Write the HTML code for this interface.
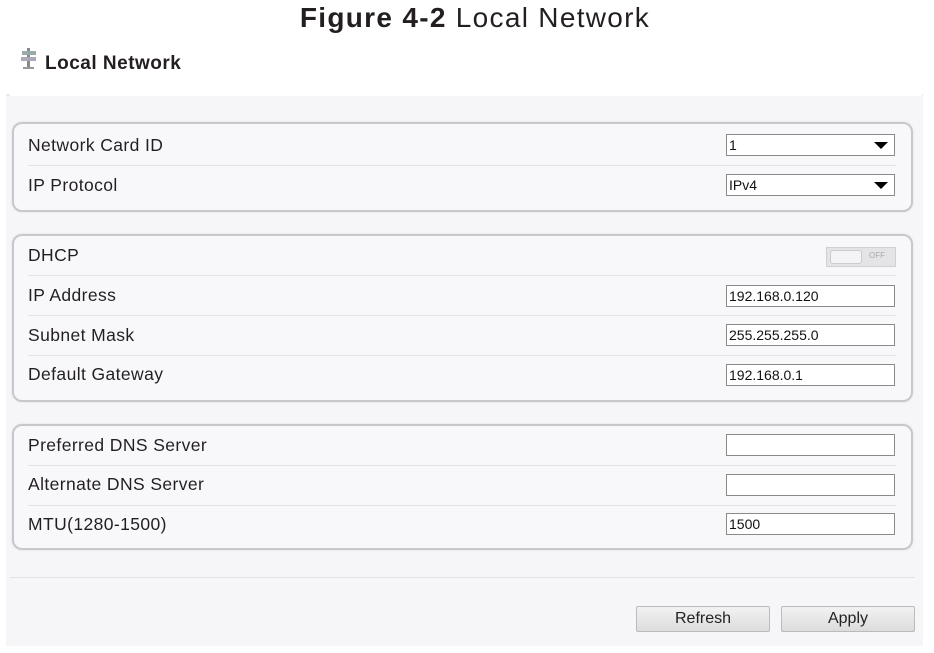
<!DOCTYPE html><html><head><style>
body{margin:0;width:934px;height:653px;background:#fff;font-family:"Liberation Sans",sans-serif;position:relative;overflow:hidden}
.a{position:absolute}
.title{left:0;width:950px;top:2px;text-align:center;font-size:28px;color:#231f20;letter-spacing:1.3px}
.bg{left:6px;top:94px;width:917px;height:550px;background:#f6f6f8;border-top:2px solid #ececee}
.p{left:12px;width:897px;border:2px solid #c8c8cc;border-radius:10px;background:#f8f8fb;box-shadow:0 0 2px #ddd}
.l{left:28px;font-size:17.5px;letter-spacing:0.4px;color:#231f20}
.s{left:28px;width:868px;height:1px;background:#e2e2e6}
.in{left:726px;border:1px solid #8a8a8a;background:#fff;font-size:14px;line-height:20px;padding-left:2px;box-sizing:border-box;width:169px;height:22px;color:#111}
.tri{position:absolute;right:6px;top:7px;width:0;height:0;border-left:7px solid transparent;border-right:7px solid transparent;border-top:7px solid #000}
.btn{top:606px;width:132px;height:24px;border:1px solid #bbb;border-radius:2px;background:linear-gradient(#f2f2f2,#dcdcdc);text-align:center;font-size:16px;line-height:24px;color:#222}
</style></head><body>
<div class="a title"><b>Figure 4-2</b> Local Network</div>
<div class="a bg"></div>
<svg class="a" style="left:19px;top:48px" width="20" height="22" viewBox="0 0 20 22"><rect x="8" y="0" width="3" height="20" fill="#888"/><rect x="3" y="3" width="14" height="4" fill="#9aa"/><rect x="2" y="9" width="15" height="4" fill="#aab"/><rect x="4" y="19" width="11" height="2" fill="#999"/></svg>
<div class="a" style="left:45px;top:53px;font-size:19px;letter-spacing:0.5px;font-weight:bold;color:#231f20">Local Network</div>
<div class="a" style="left:10px;top:93px;width:912px;height:3px;background:#fff"></div>
<div class="a p" style="top:122px;height:86px"></div>
<div class="a l" style="top:135px">Network Card ID</div>
<div class="a s" style="top:165px"></div>
<div class="a l" style="top:175px">IP Protocol</div>
<div class="a in" style="top:134px">1<span class="tri"></span></div>
<div class="a in" style="top:174px">IPv4<span class="tri"></span></div>
<div class="a p" style="top:234px;height:164px"></div>
<div class="a l" style="top:245px">DHCP</div>
<div class="a s" style="top:275px"></div>
<div class="a l" style="top:285px">IP Address</div>
<div class="a s" style="top:315px"></div>
<div class="a l" style="top:325px">Subnet Mask</div>
<div class="a s" style="top:355px"></div>
<div class="a l" style="top:364px">Default Gateway</div>
<div class="a" style="left:826px;top:247px;width:68px;height:18px;background:#e4e4e6;border:1px solid #d0d0d4"><div style="position:absolute;left:3px;top:2px;width:30px;height:12px;background:#f4f4f6;border:1px solid #ccc;border-radius:3px"></div><div style="position:absolute;left:42px;top:3px;font-size:8px;color:#aaa">OFF</div></div>
<div class="a in" style="top:285px">192.168.0.120</div>
<div class="a in" style="top:324px">255.255.255.0</div>
<div class="a in" style="top:364px">192.168.0.1</div>
<div class="a p" style="top:424px;height:122px"></div>
<div class="a l" style="top:435px">Preferred DNS Server</div>
<div class="a s" style="top:465px"></div>
<div class="a l" style="top:474px">Alternate DNS Server</div>
<div class="a s" style="top:505px"></div>
<div class="a l" style="top:514px">MTU(1280-1500)</div>
<div class="a in" style="top:434px"></div>
<div class="a in" style="top:474px"></div>
<div class="a in" style="top:513px">1500</div>
<div class="a" style="left:10px;top:577px;width:905px;height:1px;background:#e2e2e6"></div>
<div class="a btn" style="left:636px">Refresh</div>
<div class="a btn" style="left:781px">Apply</div>
</body></html>
